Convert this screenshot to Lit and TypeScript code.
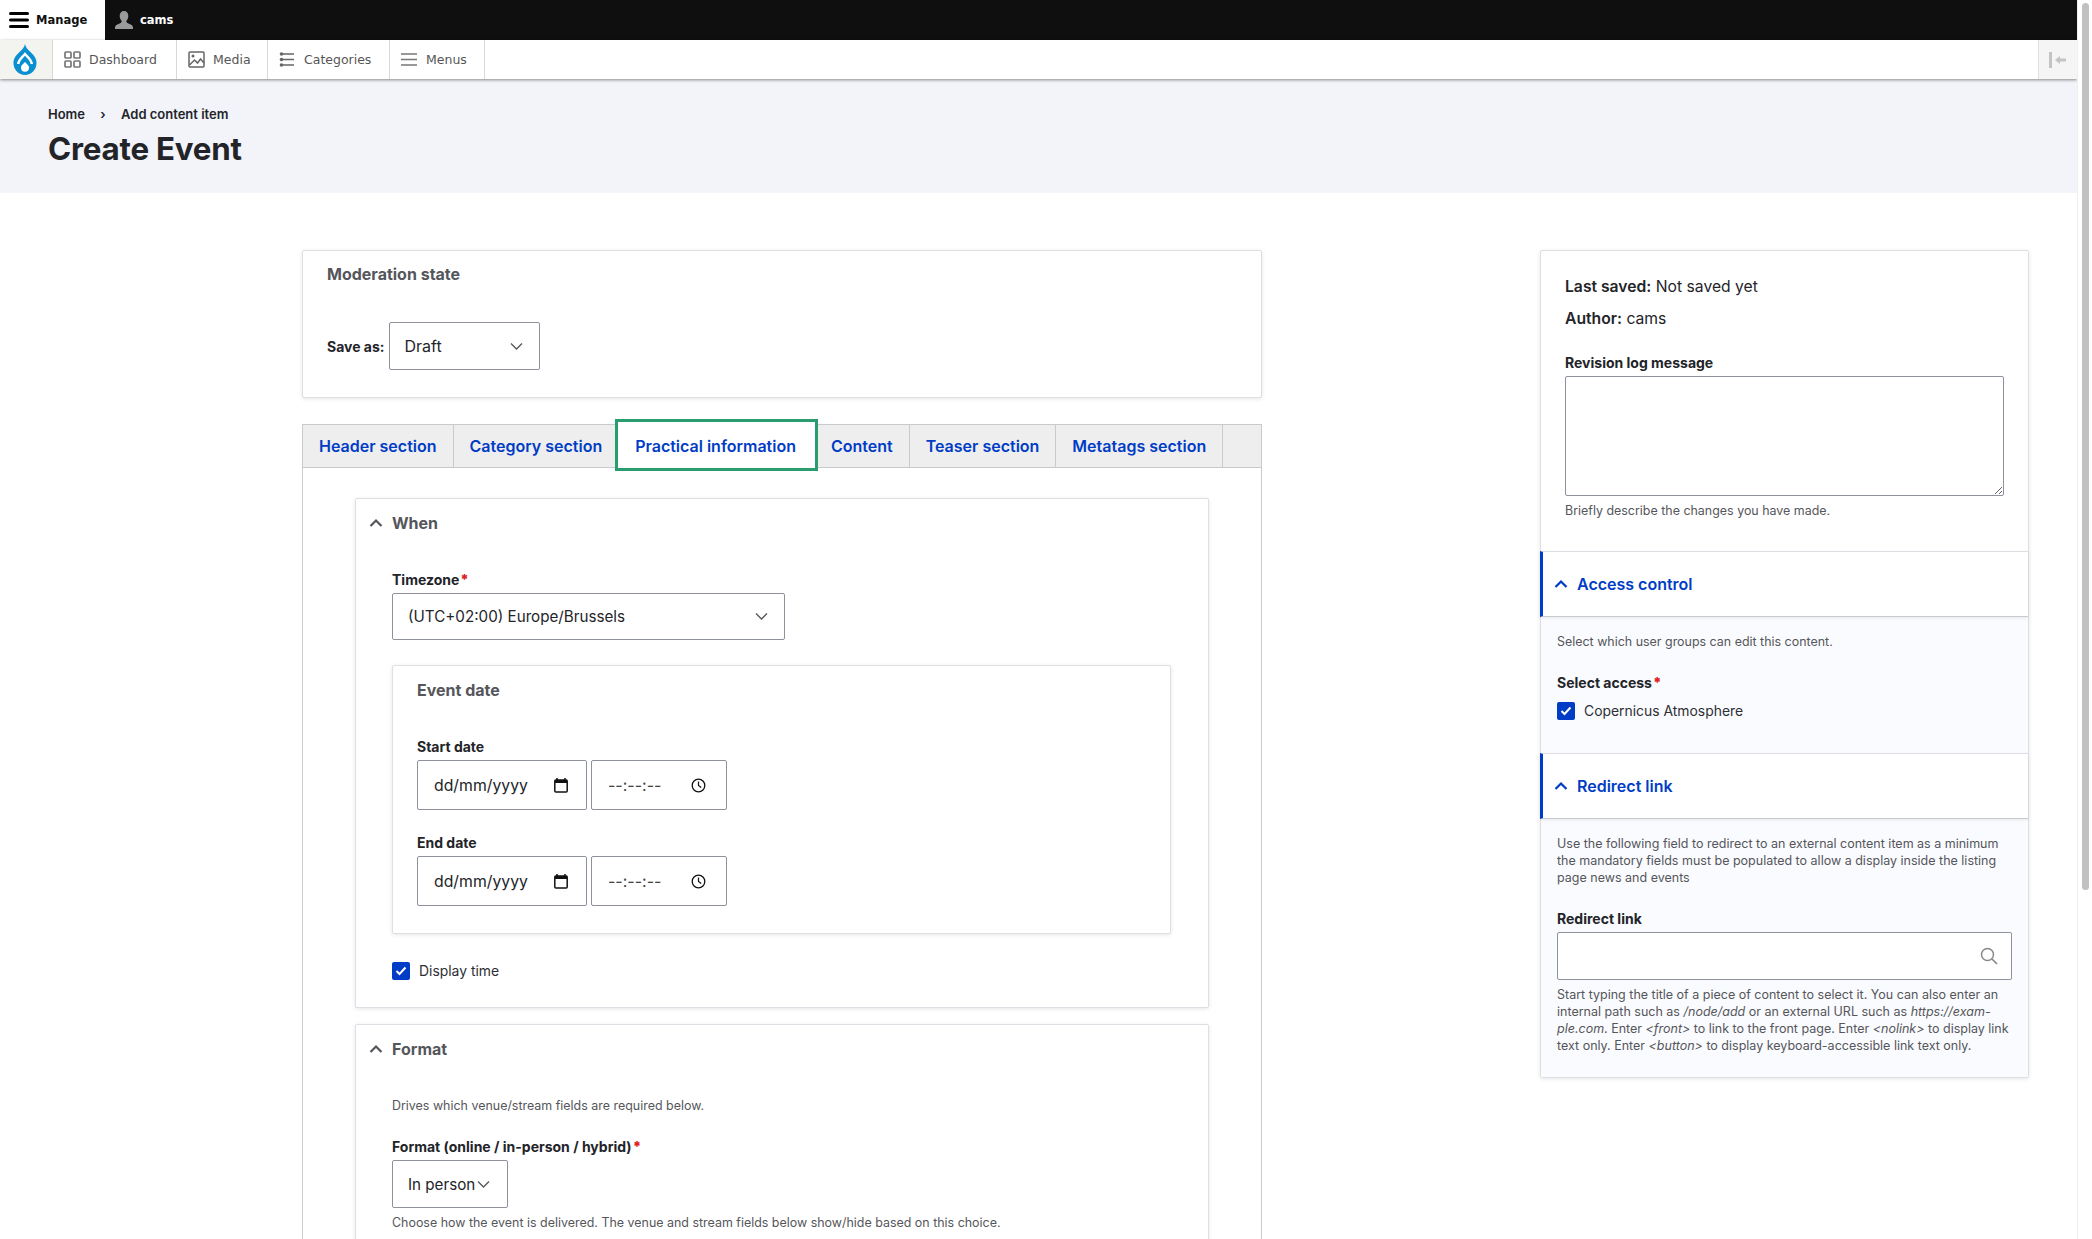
import {css, html, LitElement, svg} from 'lit';
import {customElement} from 'lit/decorators.js';

const tabs = ['Header section', 'Category section', 'Practical information', 'Content', 'Teaser section', 'Metatags section'];

const chevronDown = svg`<path d="M1 1.500l5.500 5.500L12 1.500" fill="none" stroke="#55565b" stroke-width="1.300"/>`;

const navIcons = {
	dashboard: svg`<g fill="none" stroke="#777" stroke-width="1.700"><rect x="1" y="1" width="6" height="6" rx="1"/><rect x="10" y="1" width="6" height="6" rx="1"/><rect x="1" y="10" width="6" height="6" rx="1"/><rect x="10" y="10" width="6" height="6" rx="1"/></g>`,
	media: svg`<g fill="none" stroke="#666" stroke-width="1.500"><rect x="1" y="1" width="15" height="15" rx="1"/><path d="M1.500 14l5-5 3 3 3-4 3.500 4"/></g><circle cx="5" cy="5" r="1.500" fill="#666"/>`,
	categories: svg`<g stroke="#666" stroke-width="1.600"><path d="M1 3h14M1 8.500h14M1 14h14"/></g><g fill="#666"><circle cx="2.500" cy="3" r="1.800"/><circle cx="2.500" cy="8.500" r="1.800"/><circle cx="2.500" cy="14" r="1.800"/></g>`,
	menus: svg`<path d="M0 3h16M0 8.500h16M0 14h16" stroke="#777" stroke-width="1.600"/>`,
};

const nav = [
	{label: 'Dashboard', icon: navIcons.dashboard, width: 124},
	{label: 'Media', icon: navIcons.media, width: 91},
	{label: 'Categories', icon: navIcons.categories, width: 122},
	{label: 'Menus', icon: navIcons.menus, width: 95},
];

@customElement('app-root')
export class AppRoot extends LitElement {
	protected render() {
		return html`
		<div class="page">
			<div class="main">
				${this.renderToolbar()}
				<header class="title-block">
					<nav class="crumbs"><span>Home</span><i>›</i><span>Add content item</span></nav>
					<h1>Create Event</h1>
				</header>
				<div class="layout">
					<div class="col">
						${this.renderModeration()}
						${this.renderTabs()}
					</div>
					${this.renderSidebar()}
				</div>
			</div>
			<div class="scrollbar"><div class="thumb"></div></div>
		</div>
		`;
	}

	private renderToolbar() {
		return html`
		<div class="bar-top">
			<div class="manage">
				<svg width="20" height="20" viewBox="0 0 20 20"><path d="M1.500 3.500h17M1.500 10h17M1.500 16.500h17" stroke="#000" stroke-width="3" stroke-linecap="round"/></svg>
				<span>Manage</span>
			</div>
			<div class="user">
				<svg width="20" height="20" viewBox="0 0 20 20"><path d="M10 1c2.800 0 4.300 2 4.300 5 0 2.300-1 4-2 5 0 1.500 1 2 3 3 2 .8 3.700 1.500 3.700 3.500V19H1v-1.500c0-2 1.700-2.700 3.700-3.500 2-1 3-1.500 3-3-1-1-2-2.700-2-5 0-3 1.500-5 4.300-5z" fill="#9a9a9a"/></svg>
				<span>cams</span>
			</div>
		</div>
		<div class="bar-nav">
			<div class="logo">
				<svg width="24" height="31" viewBox="0 0 25 31" preserveAspectRatio="none">
					<path d="M12.500 0c.6 3.500 3.200 5.700 6 8.300 3.200 3 6 6 6 10.700 0 6.800-5.400 12-12 12S.5 25.800.5 19c0-4.700 2.800-7.700 6-10.700C9.300 5.700 11.900 3.500 12.500 0z" fill="#0a8fd0"/>
					<path d="M5.500 20c0-4 3.500-6 7-10 3.500 4 7 6 7 10" fill="none" stroke="#fff" stroke-width="2.600"/>
					<path d="M12.500 18c2 2.200 4.200 3.200 4.200 5.600a4.200 4.200 0 0 1-8.400 0c0-2.400 2.200-3.400 4.200-5.600z" fill="#fff"/>
				</svg>
			</div>
			${nav.map((item) => html`
				<div class="nav-item" style="width:${item.width}px">
					<svg width="17" height="17" viewBox="0 0 17 17">${item.icon}</svg>
					<span>${item.label}</span>
				</div>
			`)}
			<div class="collapse">
				<svg width="18" height="16" viewBox="0 0 18 16"><rect x="0" y="0" width="3" height="16" fill="#c4c4c4"/><path d="M6 8l5-4v2.500h6v3h-6V12z" fill="#c4c4c4"/></svg>
			</div>
		</div>
		`;
	}

	private renderModeration() {
		return html`
		<section class="card moderation">
			<div class="legend">Moderation state</div>
			<div class="save-as">
				<label>Save as:</label>
				<div class="input select draft"><span>Draft</span>${this.arrow()}</div>
			</div>
		</section>
		`;
	}

	private renderTabs() {
		return html`
		<div class="tabs">
			${tabs.map((tab, i) => html`<a class="tab ${i === 2 ? 'active' : ''}">${tab}</a>`)}
			<span class="tab-rest"></span>
		</div>
		<div class="tab-panel">
			<section class="card when">
				<div class="summary">${this.caret('#55565b')}<span>When</span></div>
				<label class="field-label tz-label">Timezone<b>*</b></label>
				<div class="input select tz"><span>(UTC+02:00) Europe/Brussels</span>${this.arrow()}</div>
				<section class="card event-date">
					<div class="legend">Event date</div>
					${this.renderDateRow('Start date', 'start')}
					${this.renderDateRow('End date', 'end')}
				</section>
				<div class="check-row display-time">${this.checkbox()}<span>Display time</span></div>
			</section>
			<section class="card format">
				<div class="summary">${this.caret('#55565b')}<span>Format</span></div>
				<p class="hint format-hint">Drives which venue/stream fields are required below.</p>
				<label class="field-label fmt-label">Format (online / in-person / hybrid)<b>*</b></label>
				<div class="input select fmt"><span>In person</span>${this.arrow()}</div>
				<p class="hint fmt-help">Choose how the event is delivered. The venue and stream fields below show/hide based on this choice.</p>
			</section>
		</div>
		`;
	}

	private renderDateRow(label: string, cls: string) {
		return html`
		<label class="field-label date-label ${cls}">${label}</label>
		<div class="date-row">
			<div class="input date">
				<span>dd/mm/yyyy</span>
				<svg width="14" height="15" viewBox="0 0 14 15"><path d="M3 0v2M11 0v2" stroke="#111" stroke-width="1.500"/><rect x=".8" y="2" width="12.400" height="12" rx="1" fill="none" stroke="#111" stroke-width="1.500"/><rect x="1" y="2" width="12" height="3" fill="#111"/></svg>
			</div>
			<div class="input time">
				<span>--:--:--</span>
				<svg width="15" height="15" viewBox="0 0 15 15"><circle cx="7.500" cy="7.500" r="6.300" fill="none" stroke="#111" stroke-width="1.300"/><path d="M7.500 3.500v4l2.700 2" fill="none" stroke="#111" stroke-width="1.200"/></svg>
			</div>
		</div>
		`;
	}

	private renderSidebar() {
		return html`
		<aside class="card side">
			<div class="meta">
				<div class="meta-line"><b>Last saved:</b> Not saved yet</div>
				<div class="meta-line"><b>Author:</b> cams</div>
				<label class="field-label log-label">Revision log message</label>
				<textarea class="log"></textarea>
				<p class="hint log-hint">Briefly describe the changes you have made.</p>
			</div>
			<div class="acc-head">${this.caret('#003cc5')}<span>Access control</span></div>
			<div class="acc-body access">
				<p class="hint">Select which user groups can edit this content.</p>
				<label class="field-label access-label">Select access<b>*</b></label>
				<div class="check-row">${this.checkbox()}<span>Copernicus Atmosphere</span></div>
			</div>
			<div class="acc-head">${this.caret('#003cc5')}<span>Redirect link</span></div>
			<div class="acc-body redirect">
				<p class="hint">Use the following field to redirect to an external content item as a minimum the mandatory fields must be populated to allow a display inside the listing page news and events</p>
				<label class="field-label redirect-label">Redirect link</label>
				<div class="input search">
					<svg width="18" height="18" viewBox="0 0 18 18"><circle cx="7.500" cy="7.500" r="6" fill="none" stroke="#888" stroke-width="1.500"/><path d="M12 12l5 5" stroke="#888" stroke-width="1.700"/></svg>
				</div>
				<p class="hint redirect-help">Start typing the title of a piece of content to select it. You can also enter an<br>internal path such as <em>/node/add</em> or an external URL such as <em>https://exam-</em><br><em>ple.com</em>. Enter <em>&lt;front&gt;</em> to link to the front page. Enter <em>&lt;nolink&gt;</em> to display link<br>text only. Enter <em>&lt;button&gt;</em> to display keyboard-accessible link text only.</p>
			</div>
		</aside>
		`;
	}

	private arrow() {
		return html`<svg class="arrow" width="13" height="9" viewBox="0 0 13 9">${chevronDown}</svg>`;
	}

	private caret(color: string) {
		return html`<svg class="caret" width="14" height="10" viewBox="0 0 14 10"><path d="M1.500 8L7 2.500 12.500 8" fill="none" stroke="${color}" stroke-width="2.200"/></svg>`;
	}

	private checkbox() {
		return html`<span class="checkbox"><svg width="12" height="10" viewBox="0 0 12 10"><path d="M1.500 5l3 3 6-6.500" fill="none" stroke="#fff" stroke-width="2"/></svg></span>`;
	}

	static styles = css`
		:host {
			display: block;
			height: 100vh;
			overflow: hidden;
			font-family: Inter, "Liberation Sans", sans-serif;
			color: #232429;
			background: #fff;
		}
		.page { display: flex; height: 100%; }
		.main { flex: 1; min-width: 0; overflow: hidden; }
		.scrollbar { width: 15px; flex: none; padding: 3px 3px 0 4px; box-sizing: border-box; border-left: 1px solid #efefef; }
		.thumb { height: 887px; background: #c1c1c1; border-radius: 4px; }

		.bar-top { height: 40px; background: #0f0f0f; display: flex; font-family: "DejaVu Sans", sans-serif; font-size: 11.500px; font-weight: 700; }
		.manage { width: 105px; background: #fff; color: #111; display: flex; align-items: center; gap: 7px; padding-left: 9px; box-sizing: border-box; }
		.user { color: #fff; display: flex; align-items: center; gap: 6px; padding-left: 9px; }
		.bar-nav { height: 39px; background: #fff; display: flex; box-shadow: 0 1px 3px rgba(0, 0, 0, .45); position: relative; font-family: "DejaVu Sans", sans-serif; font-size: 12.500px; color: #565656; }
		.logo { width: 53px; background: #f3f3ef; border-right: 1px solid #d8d8d8; display: flex; align-items: center; justify-content: center; padding-right: 3px; box-sizing: border-box; }
		.nav-item { display: flex; align-items: center; gap: 8px; padding-left: 11px; box-sizing: border-box; border-right: 1px solid #d8d8d8; }
		.collapse { margin-left: auto; width: 39px; background: #f5f5f5; border-left: 1px solid #e0e0e0; display: flex; align-items: center; justify-content: center; box-sizing: border-box; }

		.title-block { background: #f3f4f9; height: 114px; padding: 25px 48px 0; box-sizing: border-box; }
		.crumbs { font-size: 13px; font-weight: 600; line-height: 20px; display: flex; }
		.crumbs i { font-style: normal; width: 36px; text-align: center; }
		h1 { margin: 5px 0 0; font-size: 31.300px; font-weight: 700; line-height: 40px; letter-spacing: -.2px; }

		.layout { display: grid; grid-template-columns: 960px 489px; justify-content: space-between; padding: 57px 48px 0 302px; }
		.card { background: #fff; border: 1px solid #dedfe4; border-radius: 2px; box-shadow: 0 1px 4px rgba(0, 0, 0, .1); box-sizing: border-box; }
		.legend { font-size: 16px; font-weight: 700; color: #55565b; line-height: 20px; }
		.field-label { display: block; font-size: 14px; font-weight: 700; line-height: 18px; }
		.field-label b { color: #dc2323; margin-left: 1px; }
		.hint { margin: 0; font-size: 12.450px; line-height: 17px; color: #55565b; }

		.input { border: 1px solid #8e929c; border-radius: 2px; background: #fff; box-sizing: border-box; display: flex; align-items: center; justify-content: space-between; font-size: 15.200px; color: #232429; }
		.select { padding: 0 16px 0 15px; }
		.arrow { flex: none; }

		.moderation { height: 148px; padding: 13px 24px 0; }
		.save-as { display: flex; align-items: center; gap: 4px; margin-top: 38px; }
		.save-as label { font-size: 14px; font-weight: 700; }
		.draft { width: 151px; height: 48px; font-size: 16px; }

		.tabs { display: flex; margin-top: 26px; height: 44px; background: #eeeeef; border: 1px solid #c9cace; box-sizing: border-box; position: relative; }
		.tab { padding: 0 16px; display: flex; align-items: center; border-right: 1px solid #c9cace; color: #003cc5; font-size: 16px; font-weight: 600; white-space: nowrap; }
		.tab.active { background: #fff; outline: 3px solid #2a9d6f; outline-offset: -3px; margin: -6px -3px -4px -4px; padding: 2px 22px 0 20px; border: 0; position: relative; z-index: 1; }
		.tab-rest { flex: 1; }
		.tab-panel { border: 1px solid #c9cace; border-top: 0; padding: 30px 52px 40px; height: 900px; box-sizing: border-box; }

		.summary { display: flex; align-items: center; gap: 9px; font-size: 16px; font-weight: 700; color: #55565b; line-height: 20px; padding-left: 13px; }
		.when { height: 510px; padding-top: 14px; }
		.tz-label { margin: 38px 0 0 36px; }
		.tz { margin: 4px 0 0 36px; width: 393px; height: 47px; }
		.event-date { margin: 25px 0 0 36px; width: 779px; height: 269px; padding: 14px 24px 0; }
		.date-label.start { margin-top: 38px; }
		.date-label.end { margin-top: 24px; }
		.date-row { display: flex; gap: 4px; margin-top: 4px; }
		.date { width: 170px; height: 50px; padding: 0 18px 0 16px; font-size: 15.800px; }
		.time { width: 136px; height: 50px; padding: 0 20px 0 16px; color: #444; font-size: 16px; }
		.check-row { display: flex; align-items: center; gap: 9px; font-size: 13.900px; color: #2e2f34; line-height: 20px; }
		.checkbox { width: 18px; height: 18px; border-radius: 2px; background: #003cc5; display: flex; align-items: center; justify-content: center; flex: none; }
		.display-time { margin: 27px 0 0 36px; }

		.format { margin-top: 16px; height: 400px; padding-top: 14px; }
		.format-hint { margin: 38px 0 0 36px; }
		.fmt-label { margin: 24px 0 0 36px; }
		.fmt { margin: 4px 0 0 36px; width: 116px; height: 48px; padding: 0 9px 0 15px; justify-content: flex-start; gap: 2px; }
		.fmt-help { margin: 6px 0 0 36px; }

		.side { height: 828px; }
		.meta { padding: 24px 24px 0; height: 300px; box-sizing: border-box; }
		.meta-line { font-size: 15.700px; line-height: 24px; margin-bottom: 8px; }
		.meta-line b { font-weight: 600; }
		.log-label { margin-top: 23px; }
		.log { display: block; width: 439px; height: 120px; margin-top: 4px; border: 1px solid #8e929c; border-radius: 2px; box-sizing: border-box; background: #fff; }
		.log-hint { margin-top: 6px; }
		.acc-head { height: 66px; margin-left: -1px; border-left: 3px solid #003cc5; border-top: 1px solid #dedfe4; border-bottom: 1px solid #c9cace; box-sizing: border-box; display: flex; align-items: center; gap: 9px; padding-left: 11px; color: #003cc5; font-size: 16px; font-weight: 600; background: #fff; box-shadow: 0 1px 3px rgba(0, 0, 0, .08); position: relative; }
		.acc-body { background: #fafbfe; padding: 0 16px; }
		.access { height: 136px; padding-top: 16px; box-sizing: border-box; }
		.access-label { margin-top: 24px; }
		.access .check-row { margin-top: 9px; }
		.redirect { height: 258px; padding-top: 16px; box-sizing: border-box; }
		.redirect .hint { font-size: 12.500px; }
		.redirect-label { margin-top: 24px; }
		.search { width: 455px; height: 48px; margin-top: 4px; justify-content: flex-end; padding-right: 13px; }
		.redirect-help { margin-top: 6px; }
	`;
}
